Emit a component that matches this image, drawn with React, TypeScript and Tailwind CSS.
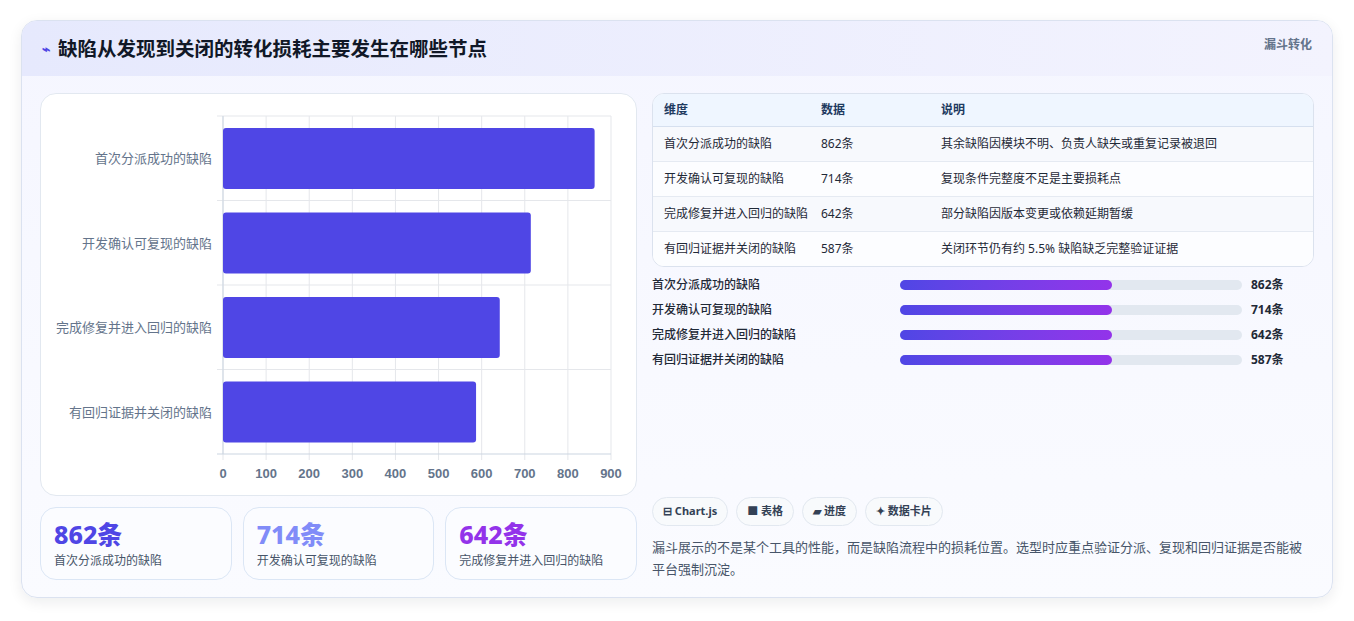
import React from "react";

const rows = [
  { name: "首次分派成功的缺陷", value: 862, note: "其余缺陷因模块不明、负责人缺失或重复记录被退回" },
  { name: "开发确认可复现的缺陷", value: 714, note: "复现条件完整度不足是主要损耗点" },
  { name: "完成修复并进入回归的缺陷", value: 642, note: "部分缺陷因版本变更或依赖延期暂缓" },
  { name: "有回归证据并关闭的缺陷", value: 587, note: "关闭环节仍有约 5.5% 缺陷缺乏完整验证证据" },
];

const font = { fontFamily: '"Noto Sans", "Noto Sans CJK SC", sans-serif' };

function Chart() {
  const x0 = 182;
  const scale = 388 / 900;
  const top = 22;
  const band = 84.5;
  return (
    <svg width="595" height="401" className="block">
      {Array.from({ length: 10 }).map((_, i) => (
        <line key={i} x1={x0 + i * 43.11} x2={x0 + i * 43.11} y1={top} y2={366} stroke="#e5e7eb" />
      ))}
      {[0, 1, 2, 3].map((i) => (
        <line key={i} x1={x0 - 6} x2={570} y1={top + i * band} y2={top + i * band} stroke="#e5e7eb" />
      ))}
      <line x1={x0 - 6} x2={570} y1={360} y2={360} stroke="#cbd5e1" />
      <line x1={x0} x2={x0} y1={top} y2={360} stroke="#cbd5e1" />
      {rows.map((r, i) => (
        <g key={r.name}>
          <rect x={x0} y={top + i * band + 12} width={r.value * scale} height={61} rx={3} fill="#4f46e5" />
          <text x={171} y={top + i * band + 47} textAnchor="end" fontSize="13" fill="#64748b" style={font}>
            {r.name}
          </text>
        </g>
      ))}
      {Array.from({ length: 10 }).map((_, i) => (
        <text key={i} x={x0 + i * 43.11} y={384} textAnchor="middle" fontSize="13" fontWeight="600" fill="#64748b" style={{ fontFamily: '"Liberation Sans", sans-serif' }}>
          {i * 100}
        </text>
      ))}
    </svg>
  );
}

export default function App() {
  const kpis = [
    { v: "862条", l: "首次分派成功的缺陷", c: "text-[#4f46e5]" },
    { v: "714条", l: "开发确认可复现的缺陷", c: "text-[#818cf8]" },
    { v: "642条", l: "完成修复并进入回归的缺陷", c: "text-[#9333ea]" },
  ];
  return (
    <div className="w-[1354px] h-[621px] bg-white pt-[20px] pl-[21px]" style={font}>
      <div className="w-[1312px] h-[578px] flex flex-col rounded-2xl border border-[#dbe2f0] bg-gradient-to-b from-[#f5f6ff] to-[#fafbff] shadow-[0_4px_14px_rgba(15,23,42,0.08)] overflow-hidden">
        <div className="h-[55px] shrink-0 flex items-center justify-between px-[20px] bg-gradient-to-r from-[#e6e9fd] to-[#f3f3fe]">
          <div className="flex items-center gap-[8px]">
            <span className="text-[#4f46e5] text-[14px] font-bold">⌁</span>
            <span className="text-[19.5px] font-bold text-[#111827]">缺陷从发现到关闭的转化损耗主要发生在哪些节点</span>
          </div>
          <span className="text-[12px] font-bold text-[#64748b] -mt-[8px]">漏斗转化</span>
        </div>
        <div className="flex-1 flex gap-[15px] px-[18px] pt-[17px] pb-[17px]">
          <div className="w-[597px] flex flex-col gap-[11px]">
            <div className="h-[403px] rounded-2xl border border-[#e2e8f0] bg-white">
              <Chart />
            </div>
            <div className="grid grid-cols-3 gap-[11px]">
              {kpis.map((k) => (
                <div key={k.v} className="h-[73px] rounded-2xl border border-[#dbe6f5] bg-[#fbfcff] px-[13px] pt-[10px]">
                  <div className={`text-[25px] leading-[32px] font-extrabold ${k.c}`}>{k.v}</div>
                  <div className="text-[12px] text-[#475569] mt-[2px]">{k.l}</div>
                </div>
              ))}
            </div>
          </div>
          <div className="w-[663px] flex flex-col">
            <div className="rounded-xl border border-[#dbe2ee] bg-white overflow-hidden text-[12px] text-[#1f2937]">
              <div className="flex h-[33px] items-center bg-[#eff6ff] border-b border-[#d6e0ef] font-bold text-[#1e3a5f]">
                <div className="w-[168px] pl-[11px]">维度</div>
                <div className="w-[120px]">数据</div>
                <div className="flex-1">说明</div>
              </div>
              {rows.map((r, i) => (
                <div key={r.name} className={`flex py-[8px] leading-[18px] ${i < 3 ? "border-b border-[#e5eaf2]" : ""} ${i % 2 === 0 ? "bg-[#f7f9fd]" : "bg-[#fcfdff]"}`}>
                  <div className="w-[168px] pl-[11px] pr-[8px]">{r.name}</div>
                  <div className="w-[120px]">{r.value}条</div>
                  <div className="flex-1">{r.note}</div>
                </div>
              ))}
            </div>
            <div className="mt-[9px] flex flex-col gap-[7px]">
              {rows.map((r) => (
                <div key={r.name} className="flex items-center h-[18px] text-[12px]">
                  <div className="w-[248px] font-medium text-[#1f2937]">{r.name}</div>
                  <div className="w-[342px] h-[10px] rounded-full bg-[#e2e8f0]">
                    <div className="h-full w-[62%] rounded-full bg-gradient-to-r from-[#4f46e5] to-[#9333ea]" />
                  </div>
                  <div className="ml-[9px] font-bold text-[#1f2937]">{r.value}条</div>
                </div>
              ))}
            </div>
            <div className="mt-auto flex gap-[8px]">
              {["⊟ Chart.js", "■ 表格", "▰ 进度", "✦ 数据卡片"].map((t) => (
                <span key={t} className="h-[29px] px-[10px] flex items-center rounded-full border border-[#e2e8f0] bg-[#f8fafc] text-[11px] font-bold text-[#334155]">
                  {t}
                </span>
              ))}
            </div>
            <p className="mt-[10px] text-[13px] leading-[22px] text-[#475569]">
              漏斗展示的不是某个工具的性能，而是缺陷流程中的损耗位置。选型时应重点验证分派、复现和回归证据是否能被平台强制沉淀。
            </p>
          </div>
        </div>
      </div>
    </div>
  );
}
